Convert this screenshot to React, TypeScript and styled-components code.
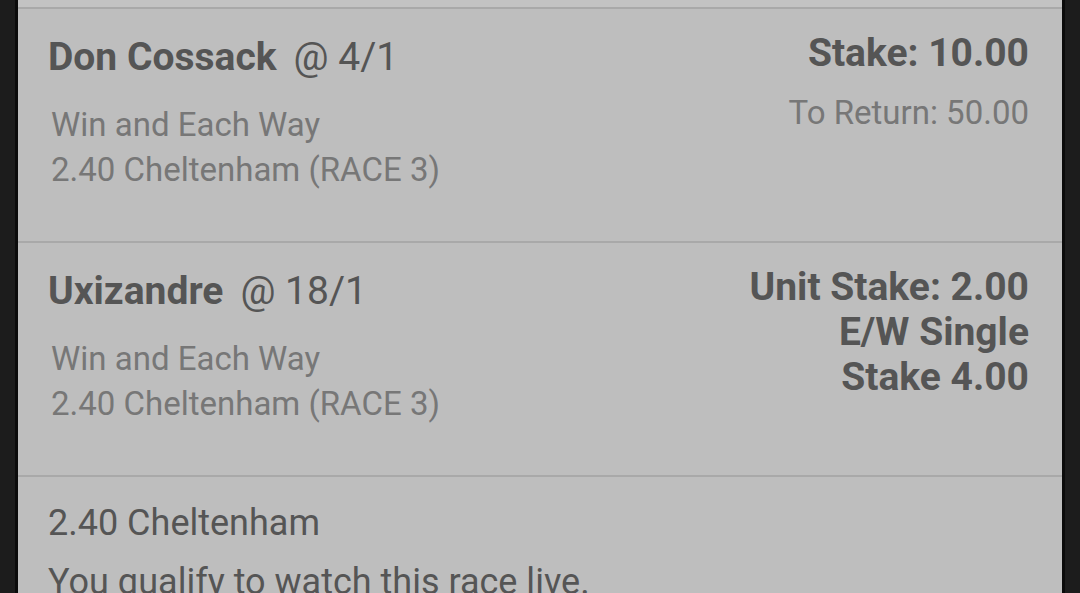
import React from "react";
import styled, { createGlobalStyle } from "styled-components";

const Global = createGlobalStyle`
  html, body { margin: 0; padding: 0; background: #1c1c1c; overflow: hidden; }
  body { font-family: Roboto, "Noto Sans", sans-serif; }
`;

const Frame = styled.div`
  height: 593px;
  display: flex;
  padding-left: 15px;
`;

const Panel = styled.div`
  width: 1044px;
  height: 593px;
  overflow: hidden;
  background: #bebebe;
  border-left: 3px solid #0b0b0b;
  border-right: 3px solid #0b0b0b;
  display: flex;
  flex-direction: column;
`;

const TopStrip = styled.div`
  height: 7px;
  background: #c3c3c3;
  border-bottom: 2px solid #a9a9a9;
  flex-shrink: 0;
`;

const BetRow = styled.div`
  height: 234px;
  flex-shrink: 0;
  box-sizing: border-box;
  border-bottom: 2px solid #a9a9a9;
  display: flex;
  justify-content: space-between;
  align-items: flex-start;
  padding: 0 33px 0 30px;
`;

const Left = styled.div`
  display: flex;
  flex-direction: column;
  padding-top: 26px;
`;

const NameLine = styled.div`
  line-height: 45px;
  color: #555555;
  white-space: nowrap;
`;

const Name = styled.span`
  font-weight: 700;
  font-size: 39px;
`;

const Odds = styled.span`
  font-size: 39px;
  margin-left: 17px;
`;

const SubList = styled.div`
  margin-top: 15px;
  display: flex;
  flex-direction: column;
`;

const Sub = styled.div`
  font-size: 33px;
  line-height: 45px;
  color: #777777;
  padding-left: 3px;
  white-space: nowrap;
`;

const Right = styled.div`
  display: flex;
  flex-direction: column;
  align-items: flex-end;
  padding-top: 22px;
  text-align: right;
`;

const StakeLine = styled.div`
  font-size: 39px;
  font-weight: 700;
  line-height: 45px;
  color: #555555;
  white-space: nowrap;
`;

const ReturnLine = styled.div`
  font-size: 33px;
  line-height: 45px;
  color: #777777;
  margin-top: 14px;
  white-space: nowrap;
`;

const InfoRow = styled.div`
  padding: 24px 30px 0;
  display: flex;
  flex-direction: column;
`;

const InfoTitle = styled.div`
  font-size: 36px;
  line-height: 45px;
  color: #555555;
`;

const InfoText = styled.div`
  font-size: 36px;
  line-height: 45px;
  color: #555555;
  margin-top: 14px;
  white-space: nowrap;
`;

export default function App() {
  return (
    <>
      <Global />
      <Frame>
        <Panel>
          <TopStrip />
          <BetRow>
            <Left>
              <NameLine>
                <Name>Don Cossack</Name>
                <Odds>@ 4/1</Odds>
              </NameLine>
              <SubList>
                <Sub>Win and Each Way</Sub>
                <Sub>2.40 Cheltenham (RACE 3)</Sub>
              </SubList>
            </Left>
            <Right>
              <StakeLine>Stake: 10.00</StakeLine>
              <ReturnLine>To Return: 50.00</ReturnLine>
            </Right>
          </BetRow>
          <BetRow>
            <Left>
              <NameLine>
                <Name>Uxizandre</Name>
                <Odds>@ 18/1</Odds>
              </NameLine>
              <SubList>
                <Sub>Win and Each Way</Sub>
                <Sub>2.40 Cheltenham (RACE 3)</Sub>
              </SubList>
            </Left>
            <Right>
              <StakeLine>Unit Stake: 2.00</StakeLine>
              <StakeLine>E/W Single</StakeLine>
              <StakeLine>Stake 4.00</StakeLine>
            </Right>
          </BetRow>
          <InfoRow>
            <InfoTitle>2.40 Cheltenham</InfoTitle>
            <InfoText>You qualify to watch this race live.</InfoText>
          </InfoRow>
        </Panel>
      </Frame>
    </>
  );
}
